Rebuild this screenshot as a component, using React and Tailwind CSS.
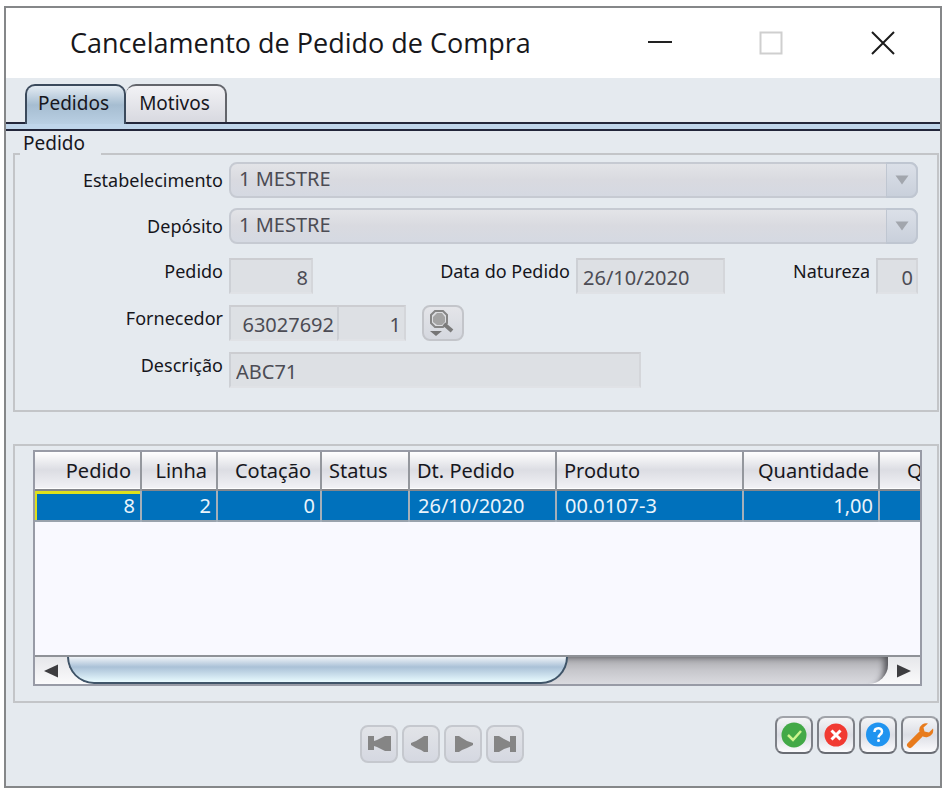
import React from "react";

function Combo({ id, label, value }) {
  return (
    <div className="flex h-9 items-center">
      <RowLabel htmlFor={id}>{label}</RowLabel>
      <div className="relative mr-[19px] h-9 flex-1">
        <select
          id={id}
          disabled
          className="h-9 w-full appearance-none rounded-lg border-2 border-[#c6cad2] bg-linear-to-b from-[#e3e4e8] via-[#d9dae0] to-[#d5d9e2] pb-[2px] pl-2 text-[20px] leading-6 text-[#4c4c54] opacity-100"
        >
          <option>{value}</option>
        </select>
        <span className="pointer-events-none absolute inset-y-0 right-0 flex w-8 items-center justify-center rounded-r-lg border-2 border-l border-[#bfc6d1] bg-linear-to-b from-[#dbe0e8] to-[#c9d0db]">
          <svg width="14" height="10" viewBox="0 0 14 10" aria-hidden="true">
            <path d="M0.5 0.5h13L7 9.5z" fill="#a2a6ad" />
          </svg>
        </span>
      </div>
    </div>
  );
}

function RowLabel({ htmlFor, children }) {
  return (
    <label htmlFor={htmlFor} className="mr-[6px] w-[208px] shrink-0 text-right text-[18px] leading-[34px] text-[#16161c]">
      {children}
    </label>
  );
}

function Field({ id, value, className = "", label }) {
  return (
    <input
      id={id}
      aria-label={label}
      readOnly
      value={value}
      className={
        "mt-1 h-9 border-2 border-t-[#cccdd1] border-r-[#d4d6da] border-b-[#e0e2e6] border-l-[#cdd0d5] bg-[#dde0e4] px-[5px] pt-[2px] text-[20px] leading-6 text-[#4c4c54] outline-none " +
        className
      }
    />
  );
}

const columns = [
  { title: "Pedido", value: "8", width: "w-[106px]", right: true },
  { title: "Linha", value: "2", width: "w-[76px]", right: true },
  { title: "Cotação", value: "0", width: "w-[104px]", right: true },
  { title: "Status", value: "", width: "w-[88px]" },
  { title: "Dt. Pedido", value: "26/10/2020", width: "w-[147px]" },
  { title: "Produto", value: "00.0107-3", width: "w-[187px]" },
  { title: "Quantidade", value: "1,00", width: "w-[136px]", right: true },
];

function OrdersTable() {
  return (
    <table className="w-full table-fixed border-collapse text-[20px]">
      <thead>
        <tr className="h-[38px] border-b-2 border-[#85868b] bg-linear-to-b from-[#ffffff] via-[#dcdde3] to-[#f1f1f5]">
          {columns.map((c) => (
            <th
              key={c.title}
              className={
                "border-r-2 border-[#94979d] leading-6 font-normal whitespace-nowrap text-[#17171d] " +
                c.width +
                (c.right ? " pr-[9px] text-right" : " pl-[7px] text-left")
              }
            >
              {c.title}
            </th>
          ))}
          <th className="overflow-hidden pl-[27px] text-left leading-6 font-normal text-[#17171d]">Q</th>
        </tr>
      </thead>
      <tbody>
        <tr className="h-[31px] border-b-2 border-[#9aa3ad] bg-[#0071bc] text-[#eaf4fb]">
          {columns.map((c, i) => (
            <td
              key={c.title}
              className={
                "border-r-2 border-[#a5afb9] leading-6 whitespace-nowrap " +
                (c.right ? "pr-[5px] text-right" : "pl-2 text-left") +
                (i === 0 ? " shadow-[inset_2px_3px_0_#dfe01d]" : "")
              }
            >
              {c.value}
            </td>
          ))}
          <td />
        </tr>
      </tbody>
    </table>
  );
}

function ScrollBar() {
  return (
    <div className="flex h-[29px] shrink-0 border-t-2 border-[#8f9297] bg-linear-to-b from-[#e6e7ea] to-[#fafafb]">
      <button aria-label="Rolar para a esquerda" className="flex w-8 items-center justify-center">
        <svg width="14" height="14" viewBox="0 0 14 14" aria-hidden="true">
          <path d="M0 7L14 0.5v13z" fill="#3d3d40" />
        </svg>
      </button>
      <div className="flex-1 overflow-hidden rounded-br-[20px] rounded-bl-[28px] bg-linear-to-b from-[#a9a9ad] via-[#c7c7cc] to-[#dadbe0] shadow-[inset_-8px_4px_6px_-4px_#55555a]">
        <div className="h-full w-[61%] rounded-b-[28px] border-2 border-t-0 border-[#3f5468] bg-linear-to-b from-[#f0f4f8] from-0% via-[#aac1d7] via-40% to-[#e9fbff] to-100%" />
      </div>
      <button aria-label="Rolar para a direita" className="flex w-8 items-center justify-center">
        <svg width="14" height="14" viewBox="0 0 14 14" aria-hidden="true">
          <path d="M14 7L0 0.5v13z" fill="#3d3d40" />
        </svg>
      </button>
    </div>
  );
}

function NavButton({ label, children }) {
  return (
    <button
      aria-label={label}
      className="flex size-[38px] items-center justify-center rounded-lg border-2 border-[#c5c8ce] bg-linear-to-b from-[#e2e4e8] to-[#d5d8e1]"
    >
      <svg width="24" height="18" viewBox="0 0 24 18" fill="#858585" aria-hidden="true">
        {children}
      </svg>
    </button>
  );
}

function ActionButton({ label, children }) {
  return (
    <button
      aria-label={label}
      className="flex size-[38px] items-center justify-center rounded-lg border-2 border-t-[#a0a3a9] border-r-[#7d8087] border-b-[#696c73] border-l-[#7d8087] bg-linear-to-b from-[#f4f5f7] via-[#dcdee5] to-[#fbfbfd]"
    >
      <svg width="28" height="28" viewBox="0 0 28 28" aria-hidden="true">
        {children}
      </svg>
    </button>
  );
}

export default function App() {
  return (
    <div className="min-h-screen bg-white pt-[6px] pr-[2px] pb-[4px] pl-[4px] font-['Noto_Sans','Open_Sans',sans-serif]">
      <main className="min-h-[782px] border-2 border-[#858789] bg-[#e5eaef]">
        <header className="flex h-[70px] items-center bg-white pr-[44px] pl-[64px]">
          <h1 className="flex-1 font-['Open_Sans','Noto_Sans',sans-serif] text-[27px] leading-9 text-[#17171b]">
            Cancelamento de Pedido de Compra
          </h1>
          <div className="flex items-center gap-[87px]">
            <button aria-label="Minimizar">
              <svg className="block" width="24" height="24" viewBox="0 0 24 24" aria-hidden="true">
                <path d="M0 11h24" stroke="#222" strokeWidth="2" />
              </svg>
            </button>
            <button aria-label="Maximizar">
              <svg className="block" width="24" height="24" viewBox="0 0 24 24" aria-hidden="true">
                <path d="M1.5 1.5h21v21h-21z" fill="none" stroke="#cfcfcf" strokeWidth="2" />
              </svg>
            </button>
            <button aria-label="Fechar">
              <svg className="block" width="26" height="24" viewBox="0 0 26 24" aria-hidden="true">
                <path d="M2 1l22 22M24 1L2 23" stroke="#1b1b1b" strokeWidth="2" />
              </svg>
            </button>
          </div>
        </header>

        <div role="tablist" className="flex h-[46px] items-end border-b-2 border-[#22263a] pl-[19px] text-[19px] text-[#17171d]">
          <button
            role="tab"
            aria-selected="true"
            className="-mb-[2px] h-10 w-[101px] rounded-t-[10px] border-2 border-b-0 border-[#3b4a5c] bg-linear-to-b from-[#e4ecf3] via-[#a6bdd1] to-[#b9cfe3] pr-1 pb-1 leading-6"
          >
            Pedidos
          </button>
          <button
            role="tab"
            aria-selected="false"
            className="h-[38px] w-[101px] rounded-t-[10px] border-2 border-b-0 border-l-0 border-[#63656b] bg-linear-to-b from-[#f2f2f5] to-[#d8d9e0] pr-[2px] pb-[2px] leading-6"
          >
            Motivos
          </button>
        </div>
        <div className="h-[7px] border-b-2 border-[#22263a] bg-[#bfd5ea]" />

        <section aria-labelledby="grupo-pedido" className="mr-[1px] ml-[7px]">
          <div className="flex items-end">
            <span className="w-[7px] border-b-2 border-[#c3c5c8]" />
            <h2 id="grupo-pedido" className="h-6 w-[81px] pl-[3px] text-[19px] leading-6 text-[#17171d]">
              Pedido
            </h2>
            <span className="flex-1 border-b-2 border-[#c3c5c8]" />
          </div>
          <div className="border-x-2 border-b-2 border-[#c3c5c8] pt-[7px] pb-[22px]">
            <div className="flex flex-col gap-[10px]">
              <Combo id="estabelecimento" label="Estabelecimento" value="1 MESTRE" />
              <Combo id="deposito" label="Depósito" value="1 MESTRE" />
            </div>
            <div className="mt-[10px] flex flex-col gap-[7px]">
              <div className="flex h-10 items-start">
                <RowLabel htmlFor="pedido">Pedido</RowLabel>
                <Field id="pedido" value="8" className="w-[84px] pr-[3px] text-right" />
                <label htmlFor="data" className="mr-[6px] w-[257px] text-right text-[18px] leading-[34px] text-[#16161c]">
                  Data do Pedido
                </label>
                <Field id="data" value="26/10/2020" className="w-[149px]" />
                <label htmlFor="natureza" className="mr-[6px] ml-auto text-[18px] leading-[34px] text-[#16161c]">
                  Natureza
                </label>
                <Field id="natureza" value="0" className="mr-[19px] w-[42px] pr-[3px] text-right" />
              </div>
              <div className="flex h-10 items-start">
                <RowLabel htmlFor="fornecedor">Fornecedor</RowLabel>
                <Field id="fornecedor" value="63027692" className="w-[108px] border-r-0 pr-[3px] pl-[2px] text-right" />
                <Field label="Loja do fornecedor" value="1" className="w-[69px] pr-[3px] text-right" />
                <button
                  aria-label="Pesquisar fornecedor"
                  className="mt-1 ml-4 flex h-9 w-[42px] items-center justify-center rounded-lg border-2 border-[#c3c5ca] bg-linear-to-b from-[#e4e5e9] to-[#d5d8df] pr-1"
                >
                  <svg width="26" height="28" viewBox="0 0 26 28" aria-hidden="true">
                    <path d="M7 2h8l4 4v8l-4 4H7l-4-4V6z" fill="#dcdde0" stroke="#858585" strokeWidth="2" />
                    <path d="M9 4h5l3 4v5l-3 3H9l-4-3V8z" fill="#a3a3a3" />
                    <path d="M16 15l8 7" stroke="#7b7b7b" strokeWidth="4" />
                    <path d="M2 22h12l-6 5z" fill="#757575" />
                  </svg>
                </button>
              </div>
              <div className="flex h-10 items-start">
                <RowLabel htmlFor="descricao">Descrição</RowLabel>
                <Field id="descricao" value="ABC71" className="w-[412px]" />
              </div>
            </div>
          </div>
        </section>

        <section aria-label="Itens" className="mt-[32px] mr-[1px] ml-[7px] border-2 border-[#c3c5c8] pt-[4px] pr-[15px] pb-[15px] pl-[18px]">
          <div className="flex h-[236px] flex-col overflow-hidden border-2 border-[#989ba6] bg-[#f9f9ff]">
            <div className="flex-1 overflow-hidden">
              <OrdersTable />
            </div>
            <ScrollBar />
          </div>
        </section>

        <footer className="flex items-start pt-[13px] pr-[1px]">
          <div className="mt-[9px] flex flex-1 justify-center gap-1 pl-[102px]">
            <NavButton label="Primeiro">
              <path d="M1 1h6v5l3-1 4-2 4-2h6v15h-6l-4-2-4-2-3-1v4H1z" />
            </NavButton>
            <NavButton label="Anterior">
              <path d="M19 1v16h-4l-3-2-5-2-5-3V8l5-2 5-3 3-2z" />
            </NavButton>
            <NavButton label="Próximo">
              <path d="M4 1h4l3 2 5 3 6 2v2l-6 3-5 2-3 2H4z" />
            </NavButton>
            <NavButton label="Último">
              <path d="M1 1h5l5 3 6 3V1h6v16h-6v-5l-6 2-5 3H1z" />
            </NavButton>
          </div>
          <div className="flex gap-1">
            <ActionButton label="Confirmar">
              <circle cx="14" cy="14" r="12.5" fill="#43a947" />
              <path d="M8 14l5 5 8-9" fill="none" stroke="#cdf58f" strokeWidth="2.5" />
            </ActionButton>
            <ActionButton label="Cancelar">
              <circle cx="14" cy="14" r="11.5" fill="#f13a32" />
              <path d="M9.5 9.5l9 9M18.5 9.5l-9 9" stroke="#fff" strokeWidth="3" />
            </ActionButton>
            <ActionButton label="Ajuda">
              <circle cx="14" cy="13.5" r="12" fill="#2094f0" />
              <path d="M10.5 11c0-5 7.500-5 7.500-.5 0 3-3.500 3-3.500 6" fill="none" stroke="#fff" strokeWidth="2.5" />
              <circle cx="14.5" cy="19.5" r="1.5" fill="#fff" />
            </ActionButton>
            <ActionButton label="Configurar">
              <path d="M4 24l10-10" stroke="#e87b1c" strokeWidth="6" strokeLinecap="round" />
              <path d="M22 2.5a7 7 0 1 0 5 5l-4 4-4.500-1-1-4z" fill="#e87b1c" />
            </ActionButton>
          </div>
        </footer>
      </main>
    </div>
  );
}
